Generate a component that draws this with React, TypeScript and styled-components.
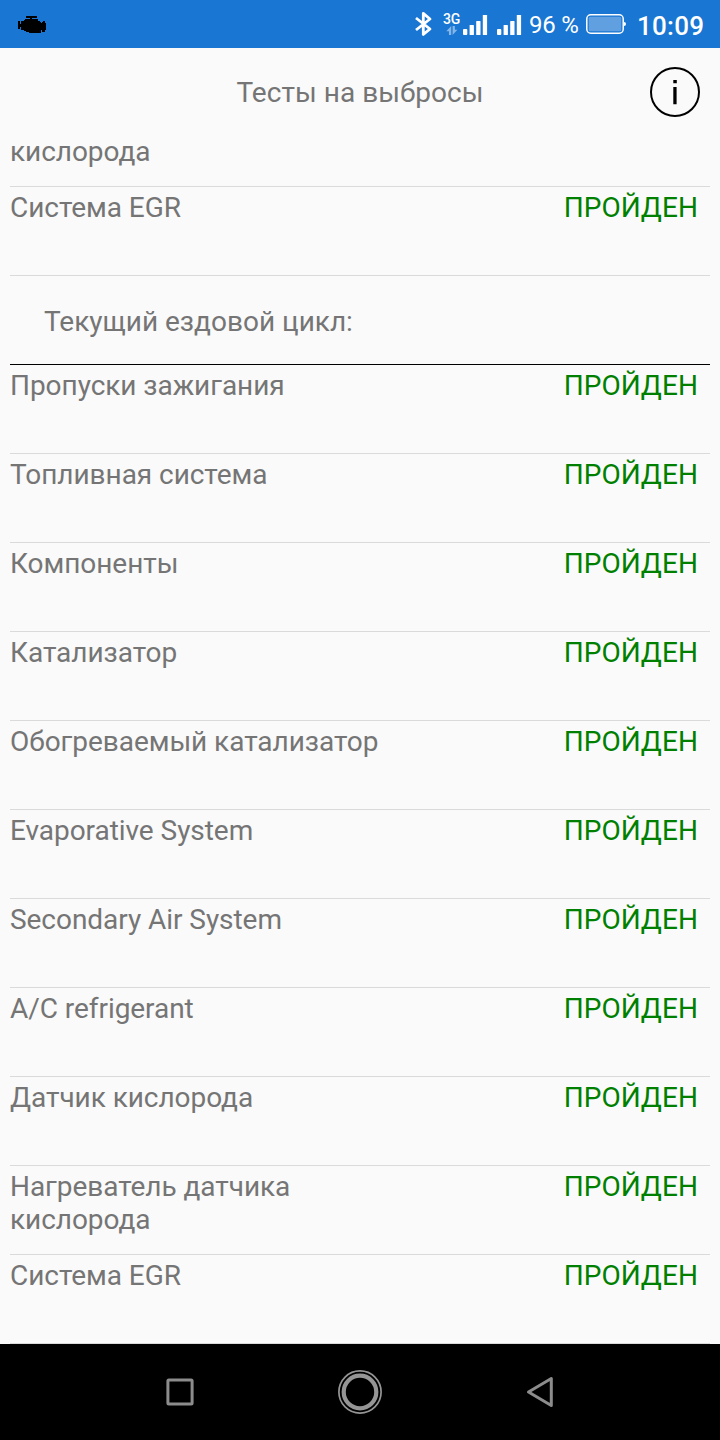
import React from "react";
import styled, { createGlobalStyle } from "styled-components";

const Global = createGlobalStyle`
  * { box-sizing: border-box; }
  body { margin: 0; background: #fafafa; font-family: Roboto, "Noto Sans", sans-serif; }
`;

const Screen = styled.div`
  width: 720px;
  height: 1440px;
  display: flex;
  flex-direction: column;
  overflow: hidden;
  background: #fafafa;
`;

const StatusBar = styled.header`
  flex: none;
  height: 48px;
  display: flex;
  align-items: center;
  background: #1976d2;
  color: #fff;
  padding: 0 16px 0 18px;
`;

const Spacer = styled.div`
  flex: 1;
`;

const StatusIcon = styled.svg<{ $gap?: number }>`
  display: block;
  flex: none;
  margin-right: ${(p) => p.$gap ?? 0}px;
`;

const Network = styled.div`
  width: 20px;
  height: 24px;
  display: flex;
  flex-direction: column;
  align-items: flex-start;

  svg {
    margin-left: 3px;
  }
`;

const NetworkLabel = styled.span`
  font-size: 14px;
  font-weight: 500;
  line-height: 14px;
  height: 15px;
  letter-spacing: -0.3px;
`;

const BatteryText = styled.span`
  width: 57px;
  font-size: 24px;
  line-height: 30px;
  white-space: nowrap;
  letter-spacing: -0.25px;
  padding-top: 2px;
`;

const Clock = styled.span`
  width: 67px;
  font-size: 26px;
  font-weight: 500;
  line-height: 30px;
  letter-spacing: 0.25px;
  padding-top: 3px;
  white-space: nowrap;
`;

const TitleBar = styled.div`
  flex: none;
  height: 87px;
  padding-top: 1px;
  display: grid;
  grid-template-columns: 70px 1fr 70px;
  align-items: center;
`;

const Title = styled.h1`
  grid-column: 2;
  margin: 0;
  font-size: 28px;
  font-weight: 400;
  line-height: 33px;
  text-align: center;
  letter-spacing: 0.05px;
  color: #757575;
`;

const InfoButton = styled.button`
  width: 50px;
  height: 50px;
  padding: 0;
  border: 0;
  background: none;
`;

const List = styled.main`
  flex: 1;
  display: flex;
  flex-direction: column;
  padding: 0 10px;
`;

const Row = styled.div<{ $height?: number }>`
  flex: none;
  height: ${(p) => p.$height ?? 89}px;
  display: flex;
  justify-content: space-between;
  padding: ${(p) => (p.$height ? 0 : 4)}px 12px 0 0;
  border-bottom: 1px solid #dadada;
  font-size: 28px;
  line-height: 33px;
`;

const Name = styled.span`
  width: 380px;
  color: #757575;
  letter-spacing: -0.05px;
  white-space: pre-line;
`;

const Result = styled.span`
  color: #008000;
  letter-spacing: 0.06px;
`;

const Section = styled.h2`
  flex: none;
  height: 89px;
  margin: 0;
  padding: 29px 0 0 34px;
  border-bottom: 1px solid #000;
  font-size: 28px;
  font-weight: 400;
  line-height: 33px;
  color: #757575;
`;

const NavBar = styled.nav`
  flex: none;
  height: 96px;
  background: #000;
  display: grid;
  grid-template-columns: repeat(3, 180px);
  justify-content: center;
  justify-items: center;
  align-items: center;
`;

const SignalBars = ({ gap }: { gap: number }) => (
  <StatusIcon $gap={gap} width="25" height="22" viewBox="0 0 25 22">
    <g fill="#fff">
      <rect x="0" y="16" width="4.3" height="6" rx="1" />
      <rect x="6.6" y="12" width="4.3" height="10" rx=".6" />
      <rect x="13.2" y="8" width="4.3" height="14" rx=".6" />
      <rect x="19.8" y="2" width="4.3" height="20" rx=".6" />
    </g>
  </StatusIcon>
);

const tests = [
  "Пропуски зажигания",
  "Топливная система",
  "Компоненты",
  "Катализатор",
  "Обогреваемый катализатор",
  "Evaporative System",
  "Secondary Air System",
  "A/C refrigerant",
  "Датчик кислорода",
  "Нагреватель датчика\nкислорода",
  "Система EGR",
];

const TestRow = ({ name }: { name: string }) => (
  <Row>
    <Name>{name}</Name>
    <Result>ПРОЙДЕН</Result>
  </Row>
);

export default function App() {
  return (
    <Screen>
      <Global />
      <StatusBar>
        <StatusIcon width="29" height="18" viewBox="0 0 29 18" shapeRendering="crispEdges">
          <path d="M8 1h11v2h-5v1h6v2h2v1h1v1h1V7h1V6h2v2h1v7h-1v2h-3v-2h-1v3H11v-1H8v-1H6v-1H3v-3H2v2H0V6h2v3h1V6h3V5h1V4h5V3H8z" fill="#000" />
        </StatusIcon>
        <Spacer />
        <StatusIcon $gap={11} width="17" height="26" viewBox="0 0 17 26">
          <path d="M1 7L15 18 8.3 23.4V2.4L15 8 1 19" fill="none" stroke="#fff" strokeWidth="2.8" strokeLinejoin="round" />
        </StatusIcon>
        <Network>
          <NetworkLabel>3G</NetworkLabel>
          <svg width="12" height="10" viewBox="0 0 12 10">
            <path d="M5.2 0v9.5H2.8V5.5H0zM6.6 0H9v4h2.6l-5 5.5z" fill="#85b7e8" />
          </svg>
        </Network>
        <SignalBars gap={9} />
        <SignalBars gap={7} />
        <BatteryText>96 %</BatteryText>
        <StatusIcon $gap={10} width="41" height="20" viewBox="0 0 41 20">
          <rect x=".8" y=".8" width="36.4" height="18.4" rx="4" fill="none" stroke="#fff" strokeWidth="1.5" />
          <rect x="2.7" y="2.7" width="32.6" height="14.6" rx="1.5" fill="#609fe0" />
          <path d="M38 8q2 0 2 2t-2 2z" fill="#fff" />
        </StatusIcon>
        <Clock>10:09</Clock>
      </StatusBar>
      <TitleBar>
        <Title>Тесты на выбросы</Title>
        <InfoButton aria-label="Info">
          <svg width="50" height="50" viewBox="0 0 50 50">
            <circle cx="25" cy="25" r="24" fill="none" stroke="#000" strokeWidth="2" />
            <path d="M23.3 13h3.5v3.2h-3.5zM23.3 20h3.3v17.2h-3.3z" fill="#000" />
          </svg>
        </InfoButton>
      </TitleBar>
      <List>
        <Row $height={52}>
          <Name>кислорода</Name>
        </Row>
        <TestRow name="Система EGR" />
        <Section>Текущий ездовой цикл:</Section>
        {tests.map((name) => (
          <TestRow key={name} name={name} />
        ))}
      </List>
      <NavBar>
        <svg width="28" height="28" viewBox="0 0 28 28">
          <rect x="1.9" y="1.9" width="24.2" height="24.2" rx="1" fill="none" stroke="#8c8c8c" strokeWidth="3" />
        </svg>
        <svg width="44" height="44" viewBox="0 0 44 44" fill="none" stroke="#959595">
          <circle cx="22" cy="22" r="21.1" strokeWidth="1.7" />
          <circle cx="22" cy="22" r="16.3" strokeWidth="4.2" />
        </svg>
        <svg width="28" height="32" viewBox="0 0 28 32">
          <path d="M25.3 2.5v27L2.5 16z" fill="none" stroke="#8c8c8c" strokeWidth="3" strokeLinejoin="round" />
        </svg>
      </NavBar>
    </Screen>
  );
}
